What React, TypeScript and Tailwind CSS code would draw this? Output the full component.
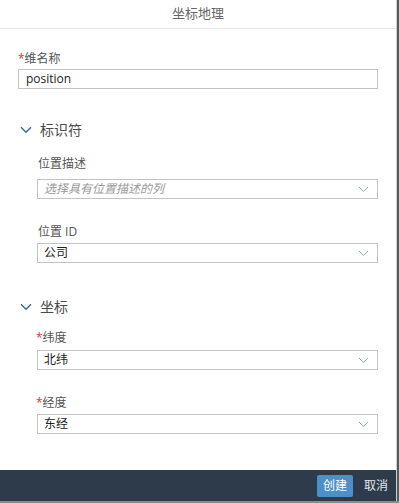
import React from "react";

const font = { fontFamily: '"Open Sans", "Noto Sans CJK SC", sans-serif' };

function SmallChevron() {
  return (
    <svg width="11" height="7" viewBox="0 0 11 7" className="shrink-0">
      <path d="M1 1 L5.5 5.5 L10 1" fill="none" stroke="#86a4c4" strokeWidth="1" />
    </svg>
  );
}

function SectionChevron() {
  return (
    <svg width="12" height="8" viewBox="0 0 12 8" className="shrink-0">
      <path d="M1 1.2 L6 6.2 L11 1.2" fill="none" stroke="#3e6794" strokeWidth="1.4" />
    </svg>
  );
}

function Label({ text, required, className }: { text: string; required?: boolean; className?: string }) {
  return (
    <div className={"h-4 text-[12px] leading-4 text-[#555] " + (className || "")}>
      {required && <span className="text-[#d33]">*</span>}
      {text}
    </div>
  );
}

function Select({ value, placeholder, className }: { value?: string; placeholder?: string; className?: string }) {
  return (
    <div
      className={
        "h-5 border border-[#c4c4c4] bg-white flex items-center justify-between pl-[6px] pr-[8px] " +
        (className || "")
      }
    >
      {value ? (
        <span className="text-[12px] leading-4 text-[#222]">{value}</span>
      ) : (
        <span className="text-[12px] leading-4 text-[#9a9a9a] italic">{placeholder}</span>
      )}
      <SmallChevron />
    </div>
  );
}

function Section({ title, className }: { title: string; className?: string }) {
  return (
    <div className={"h-5 flex items-center pl-[20px] " + (className || "")}>
      <SectionChevron />
      <span className="ml-[8px] text-[14px] leading-5 text-[#4a4a4a]">{title}</span>
    </div>
  );
}

export default function App() {
  return (
    <div className="w-[399px] h-[503px] flex flex-col bg-[#8a8a8a]" style={font}>
      <div className="flex h-[501px]">
        <div className="w-[396px] flex flex-col bg-white">
          <div className="h-[29px] shrink-0 border-b border-[#e6e6e6] flex items-center justify-center">
            <span className="text-[13px] text-[#666]">坐标地理</span>
          </div>
          <div className="flex-1 flex flex-col">
            <Label text="维名称" required className="ml-[18px] mt-[22px]" />
            <div className="ml-[18px] w-[360px] h-5 mt-[2px] border border-[#c4c4c4] flex items-center pl-[7px]">
              <span className="text-[12px] leading-4 text-[#222]">position</span>
            </div>

            <Section title="标识符" className="mt-[31px]" />
            <Label text="位置描述" className="ml-[38px] mt-[16px]" />
            <Select placeholder="选择具有位置描述的列" className="ml-[37px] w-[341px] mt-[7px]" />
            <Label text="位置 ID" className="ml-[38px] mt-[25px]" />
            <Select value="公司" className="ml-[37px] w-[341px] mt-[3px]" />

            <Section title="坐标" className="mt-[34px]" />
            <Label text="纬度" required className="ml-[36px] mt-[13px]" />
            <Select value="北纬" className="ml-[37px] w-[341px] mt-[4px]" />
            <Label text="经度" required className="ml-[36px] mt-[25px]" />
            <Select value="东经" className="ml-[37px] w-[341px] mt-[3px]" />
          </div>
          <div className="h-[31px] shrink-0 bg-[#2d3b4a] flex items-center justify-end pr-[8px]">
            <div className="w-[36px] h-[22px] rounded-[2px] bg-[#4d8fca] flex items-center justify-center">
              <span className="text-[12px] text-white">创建</span>
            </div>
            <span className="ml-[11px] text-[12px] text-[#e4e8ec]">取消</span>
          </div>
        </div>
        <div className="w-[1px] bg-[#cfcfcf]" />
        <div className="w-[2px] bg-[#585858]" />
      </div>
    </div>
  );
}
